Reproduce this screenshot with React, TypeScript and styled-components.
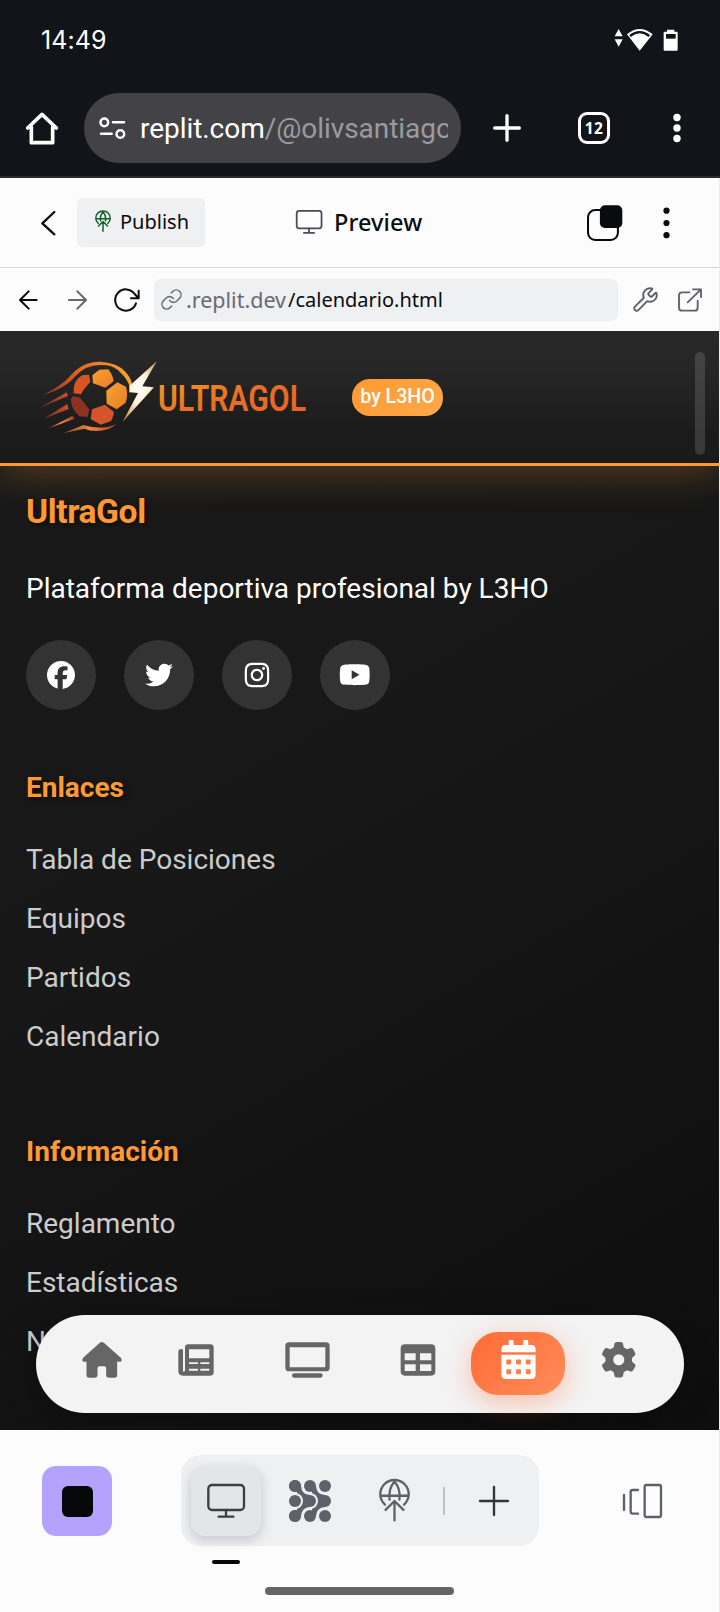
import React from 'react';
import styled, { createGlobalStyle, css } from 'styled-components';
import { FaFacebook, FaTwitter, FaInstagram, FaYoutube, FaGear } from 'react-icons/fa6';
import { FaCalendarAlt } from 'react-icons/fa';
import { Link, Wrench } from 'lucide-react';

const GlobalStyle = createGlobalStyle`
  * { box-sizing: border-box; }
  body { margin: 0; background: #fcfcfc; font-family: Roboto, sans-serif; }
  h2, h3, p, ul { margin: 0; padding: 0; }
  button { border: 0; padding: 0; margin: 0; background: none; font: inherit; color: inherit; }
  svg { display: block; flex: none; overflow: visible; }
`;

const Screen = styled.div`
  width: 720px;
  height: 1612px;
  display: flex;
  flex-direction: column;
  overflow: hidden;
`;

/* ---------- Android status bar and browser bar ---------- */

const StatusBar = styled.div`
  height: 80px;
  display: flex;
  align-items: center;
  padding: 0 41px 0 41px;
  background: #131419;
  color: #fff;
`;

const Clock = styled.span`
  flex: 1;
  font-family: Inter, sans-serif;
  font-size: 25px;
  line-height: 32px;
  letter-spacing: 0.1px;
`;

const BrowserBar = styled.div`
  height: 98px;
  display: flex;
  align-items: flex-start;
  padding: 13px 0 0 26px;
  background: #131419;
  border-bottom: 2px solid #2a2a31;
  color: #fff;
`;

const BarSlot = styled.div<{ $w: number; $ml: number }>`
  width: ${p => p.$w}px;
  margin-left: ${p => p.$ml}px;
  height: 70px;
  display: flex;
  align-items: center;
  justify-content: center;
`;

const Omnibox = styled.div`
  width: 377px;
  height: 70px;
  margin-left: 26px;
  padding: 0 13px 0 15px;
  display: flex;
  align-items: center;
  border-radius: 35px;
  background: #434347;
`;

const OmniText = styled.div`
  flex: 1;
  margin-left: 14px;
  padding-top: 1px;
  overflow: hidden;
  white-space: nowrap;
  font-size: 28px;
  line-height: 40px;
  letter-spacing: -0.05px;
  span { color: #9b9b9f; }
`;

const TabCount = styled.div`
  width: 32px;
  height: 32px;
  border: 3px solid #fff;
  border-radius: 9px;
  font: 700 15.5px/26px 'Open Sans', sans-serif;
  letter-spacing: 0.4px;
  text-align: center;
`;

/* ---------- Workspace header ---------- */

const Workspace = styled.div`
  flex: 1;
  display: flex;
  flex-direction: column;
  border-right: 1px solid #ededf0;
  background: #fcfcfc;
`;

const ToolHeader = styled.div`
  height: 90px;
  display: flex;
  align-items: center;
  padding-left: 41px;
  border-bottom: 1px solid #d3d4d6;
  color: #0a0b0d;
`;

const PublishButton = styled.button`
  width: 128px;
  height: 49px;
  margin-left: 21px;
  padding: 0 0 2px 18px;
  display: flex;
  align-items: center;
  gap: 9px;
  border-radius: 6px;
  background: #eff0f2;
  font: 400 20px/28px 'Noto Sans', sans-serif;
`;

const Title = styled.div`
  margin-left: 91px;
  width: 291px;
  padding-bottom: 2px;
  display: flex;
  align-items: center;
  gap: 12px;
  font: 500 23.5px/32px 'Noto Sans', sans-serif;
  letter-spacing: 0.1px;
`;

const AddressRow = styled.div`
  height: 63px;
  display: flex;
  align-items: center;
  padding-left: 19px;
`;

const Address = styled.div`
  width: 464px;
  height: 42px;
  margin-left: 14px;
  padding-left: 6px;
  display: flex;
  align-items: center;
  border-radius: 7px;
  background: #eff0f2;
  color: #0a0b0d;
  font: 400 20px/28px 'Noto Sans', sans-serif;
  white-space: nowrap;
`;

const Host = styled.span`
  width: 102px;
  margin-left: 3px;
  color: #696a72;
  font-size: 21.5px;
`;

const Path = styled.span`
  letter-spacing: 0;
`;

const Spacer = styled.div<{ $w: number }>`
  width: ${p => p.$w}px;
`;

/* ---------- Previewed site ---------- */

const Site = styled.div`
  position: relative;
  height: 1099px;
  overflow: hidden;
  background: linear-gradient(150deg, #1a1a1a 0%, #171717 45%, #0e0e0e 100%);
`;

const SiteHeader = styled.header`
  position: relative;
  height: 135px;
  display: flex;
  align-items: center;
  gap: 44px;
  padding-left: 38px;
  border-bottom: 3px solid #ff9933;
  background: linear-gradient(180deg, #282828 0%, #262626 30%, #1b1b1b 75%, #1a1a1a 100%);
  box-shadow: 0 7px 35px rgba(255, 153, 51, 0.27);
`;

const LogoWord = styled.text`
  font: 600 108px Roboto, sans-serif;
`;

const Badge = styled.span`
  width: 91px;
  height: 37px;
  border-radius: 18px;
  background: linear-gradient(135deg, #ff9933, #ffa947);
  color: #fff;
  font: 500 19.6px/35px Roboto, sans-serif;
  text-align: center;
  white-space: nowrap;
`;

const ScrollThumb = styled.div`
  position: absolute;
  top: 21px;
  right: 14px;
  width: 10px;
  height: 103px;
  border-radius: 5px;
  background: linear-gradient(#444, #383838);
`;

const Footer = styled.footer`
  padding: 26px 26px 0;
`;

const heading = css`
  color: #ff9933;
  font-weight: 700;
  text-shadow: 2px 2px 4px rgba(0, 0, 0, 0.5);
`;

const Brand = styled.h2`
  ${heading}
  font-size: 33.6px;
  line-height: 40px;
  letter-spacing: -0.4px;
`;

const Tagline = styled.p`
  margin-top: 35px;
  color: #fff;
  font-size: 28px;
  line-height: 44px;
`;

const Socials = styled.div`
  display: flex;
  gap: 28px;
  margin-top: 29px;
`;

const Social = styled.a`
  width: 70px;
  height: 70px;
  display: flex;
  align-items: center;
  justify-content: center;
  border-radius: 50%;
  background: #333;
  color: #fff;
`;

const Section = styled.section<{ $mt: number }>`
  margin-top: ${p => p.$mt}px;
`;

const SectionTitle = styled.h3`
  ${heading}
  font-size: 28px;
  line-height: 34px;
`;

const Links = styled.ul`
  margin-top: 25px;
  list-style: none;
  color: #ccc;
  font-size: 28px;
  line-height: 59px;
`;

const TabBar = styled.nav`
  position: absolute;
  left: 36px;
  bottom: 17px;
  width: 648px;
  height: 98px;
  display: flex;
  padding: 17px 0 0 22px;
  border-radius: 49px;
  background: #f3f3f3;
  box-shadow: 0 8px 32px rgba(0, 0, 0, 0.3);
`;

const Tab = styled.a<{ $w: number; $active?: boolean }>`
  width: ${p => p.$w}px;
  height: 63px;
  padding-bottom: 8px;
  display: flex;
  align-items: center;
  justify-content: center;
  color: #666;
  ${p =>
    p.$active &&
    css`
      margin: 0 4px;
      border-radius: 27px;
      background: linear-gradient(135deg, #ff6b35, #ff8c5a);
      box-shadow: 0 7px 26px rgba(255, 107, 53, 0.38);
      color: #fff;
    `}
`;

/* ---------- Bottom dock ---------- */

const Dock = styled.div`
  position: relative;
  height: 182px;
  display: flex;
  align-items: flex-start;
  padding: 25px 0 0 42px;
`;

const AgentButton = styled.button`
  width: 70px;
  height: 70px;
  margin-top: 11px;
  display: flex;
  align-items: center;
  justify-content: center;
  border-radius: 14px;
  background: #b3a3ff;
`;

const AgentMark = styled.span`
  width: 31px;
  height: 31px;
  border-radius: 6px;
  background: #07080a;
`;

const ToolGroup = styled.div`
  width: 358px;
  height: 91px;
  margin: 0 83px 0 69px;
  padding: 0 10px;
  display: flex;
  align-items: center;
  gap: 14px;
  border-radius: 20px;
  background: #eff0f2;
`;

const Tool = styled.button<{ $active?: boolean }>`
  position: relative;
  width: 70px;
  height: 70px;
  display: flex;
  align-items: center;
  justify-content: center;
  border-radius: 14px;
  ${p =>
    p.$active &&
    css`
      background: #e4e5e7;
      box-shadow: 0 4px 12px rgba(10, 12, 20, 0.18);
      &::after {
        content: '';
        position: absolute;
        left: 21px;
        top: 94px;
        width: 28px;
        height: 4px;
        border-radius: 2px;
        background: #07080a;
      }
    `}
`;

const Divider = styled.span`
  width: 2px;
  height: 28px;
  background: #c0c1c4;
`;

const LayoutButton = styled.button`
  margin-top: 29px;
`;

const GestureBar = styled.div`
  position: absolute;
  left: 265px;
  bottom: 17px;
  width: 189px;
  height: 8px;
  border-radius: 4px;
  background: #666;
`;

/* ---------- Icons ---------- */

type LineProps = {
  w: number;
  h: number;
  box: string;
  color?: string;
  sw: number;
  children: React.ReactNode;
};

const LineIcon = ({ w, h, box, color = 'currentColor', sw, children }: LineProps) => (
  <svg width={w} height={h} viewBox={box} fill="none" stroke={color} strokeWidth={sw} strokeLinecap="round" strokeLinejoin="round">
    {children}
  </svg>
);

const StatusIcons = () => (
  <svg width="64" height="24" viewBox="766 82 192 72" fill="#fff">
    <path d="M777 85l12 22h-24zM777 138l12-22h-24z" />
    <path d="M802 101Q840 69 879 101L840 150Z" />
    <path d="M811 106Q840 83 869 106" fill="none" stroke="#131419" strokeWidth="7" />
    <path d="M915 93h7v-6h22v6h7q3 0 3 3v51q0 3-3 3h-36q-3 0-3-3v-51q0-3 3-3z" />
    <path d="M919 100h29v14h-29z" fill="#131419" />
  </svg>
);

const HomeOutline = () => (
  <LineIcon w={32} h={33} box="78 335 96 99" sw={11}>
    <path d="M94 380V427H158V380M83 383L126 342L169 383" />
  </LineIcon>
);

const Tune = () => (
  <LineIcon w={27} h={24} box="296 348 81 72" sw={7.5}>
    <circle cx="312" cy="367" r="11.5" />
    <path d="M338 367H371M302 401H334" />
    <circle cx="360" cy="402" r="11.5" />
  </LineIcon>
);

const Monitor = ({ w, h, sw, color }: { w: number; h: number; sw: number; color: string }) => (
  <LineIcon w={w} h={h} box="622 162 112 102" sw={sw} color={color}>
    <rect x="625" y="165" width="107" height="75" rx="11" />
    <path d="M678 240V260M656 260H700" />
  </LineIcon>
);

const GlobeUp = ({ w, h, color, sw }: { w: number; h: number; color: string; sw: number }) => (
  <LineIcon w={w} h={h} box="55 150 94 126" color={color} sw={sw}>
    <path d="M73 224A43 43 0 1 1 131 224" />
    <path d="M60 197H144M87 209Q83 176 102 154Q121 176 117 209M102 214V272M75 240L102 213L129 240" />
  </LineIcon>
);

const inkColor = '#5f616a';
const groupColor = '#eff0f2';

const Chevron = ({ x }: { x: number }) => (
  <g transform={`translate(${x} 0)`}>
    {[{ c: groupColor, grow: 6 }, { c: inkColor, grow: 0 }].map(({ c, grow }) => (
      <g key={c} fill={c}>
        <path d="M36 18Q38 44 63 45V81Q38 82 36 108L24 92V34Z" stroke={c} strokeWidth={grow * 2} />
        {[[18, 18], [63, 63], [18, 108]].map(([cx, cy]) => (
          <circle key={`${cx}-${cy}`} cx={cx} cy={cy} r={18 + grow} />
        ))}
      </g>
    ))}
  </g>
);

const NetworkMark = () => (
  <svg width="42" height="42" viewBox="0 0 126 126" fill={inkColor}>
    <Chevron x={45} />
    <Chevron x={0} />
    <circle cx="18" cy="63" r="24" fill={groupColor} />
    <circle cx="18" cy="18" r="18" />
    <circle cx="18" cy="108" r="18" />
    <circle cx="18" cy="63" r="18" />
    <circle cx="108" cy="18" r="18" />
    <circle cx="108" cy="108" r="18" />
  </svg>
);

const Logo = () => (
  <svg width="270" height="78" viewBox="114 84 810 234">
    <defs>
      <linearGradient id="swoosh" x1="0" x2="1" y1="0" y2="0">
        <stop offset="0" stopColor="#8e3220" />
        <stop offset="0.45" stopColor="#e96a25" />
        <stop offset="1" stopColor="#f8a82e" />
      </linearGradient>
      <linearGradient id="streak" x1="0" x2="1" y1="0" y2="0">
        <stop offset="0" stopColor="#6e2b1c" />
        <stop offset="1" stopColor="#cf4c33" />
      </linearGradient>
      <linearGradient id="tail" x1="0" x2="1" y1="0" y2="0">
        <stop offset="0" stopColor="#8a4a28" />
        <stop offset="0.5" stopColor="#f5853a" />
        <stop offset="1" stopColor="#a33a20" />
      </linearGradient>
      <linearGradient id="amber" x1="0" x2="1" y1="0" y2="1">
        <stop offset="0" stopColor="#f8a52d" />
        <stop offset="1" stopColor="#ea7a2a" />
      </linearGradient>
      <linearGradient id="word" x1="0" x2="1" y1="0" y2="0.9">
        <stop offset="0" stopColor="#f2a127" />
        <stop offset="0.5" stopColor="#e87024" />
        <stop offset="1" stopColor="#ea6226" />
      </linearGradient>
      <radialGradient id="flash" cx="0.5" cy="0.45" r="0.6">
        <stop offset="0" stopColor="#fff" />
        <stop offset="0.45" stopColor="#fff1d6" />
        <stop offset="1" stopColor="#c99a62" />
      </radialGradient>
    </defs>
    <path d="M128 196Q186 166 211 137Q248 94 300 95Q350 97 376 125Q397 148 397 172L390 174Q384 148 362 128Q342 108 320 106Q260 98 226 139Q198 174 128 196Z" fill="url(#swoosh)" />
    <path d="M118 234L200 187L204 198Z" fill="url(#streak)" />
    <path d="M129 267L202 222L206 237Z" fill="url(#streak)" />
    <path d="M143 296L217 258L224 266Z" fill="url(#tail)" />
    <path d="M189 310L250 285Q306 302 350 282Q330 302 289 303Q268 303 253 296Z" fill="url(#tail)" />
    <path d="M247 136L267 134L271 155L250 181L243 193L221 190Q218 150 247 136Z" fill="#d95424" />
    <path d="M277 136L298 119L325 118Q338 134 341 154L316 173L279 160Z" fill="url(#amber)" />
    <path d="M352 157L378 170Q385 195 377 218L350 238L320 221L319 182Z" fill="url(#amber)" />
    <path d="M218 199L239 202L268 238L263 261L238 259Q212 236 213 208Z" fill="#8b3222" />
    <path d="M276 238L315 224L342 246Q338 268 332 274L302 284L272 267Z" fill="#d55429" />
    <path d="M471 93L388 168V187L414 189L368 275L462 172L427 169Z" fill="url(#flash)" />
    <LogoWord x="474" y="242" textLength="444" lengthAdjust="spacingAndGlyphs" fill="url(#word)">
      ULTRAGOL
    </LogoWord>
  </svg>
);

const HouseSolid = () => (
  <svg width="40" height="36" viewBox="245 155 119 108" fill="currentColor">
    <path d="M297 158Q304 152 311 158L361 202Q366 208 361 214H350V254Q350 262 342 262H326Q317 262 317 254V234Q317 228 311 228H297Q291 228 291 234V254Q291 262 282 262H266Q258 262 258 254V214H248Q243 208 248 202Z" />
  </svg>
);

const NewsSolid = () => (
  <svg width="36" height="32" viewBox="534 161 108 96" fill="currentColor" fillRule="evenodd">
    <path d="M565 162H631Q641 162 641 172V246Q641 256 631 256H549Q535 256 535 242V183Q535 177 541 177H549V241Q549 244 552 244Q555 244 555 240V172Q555 162 565 162ZM567 177V204H628V177ZM567 216V221H594V216ZM601 216V221H628V216ZM567 235V241H594V235ZM601 235V241H628V235Z" />
  </svg>
);

const TvSolid = () => (
  <svg width="45" height="36" viewBox="856 155 135 108" fill="currentColor" fillRule="evenodd">
    <path d="M868 156H979Q990 156 990 167V232Q990 243 979 243H868Q857 243 857 232V167Q857 156 868 156ZM870 171V231H977V171Z" />
    <rect x="877" y="249" width="92" height="13" rx="6.5" />
  </svg>
);

const TableSolid = () => (
  <svg width="36" height="32" viewBox="118 161 108 96" fill="currentColor" fillRule="evenodd">
    <path d="M133 162H211Q224 162 224 175V243Q224 256 211 256H133Q120 256 120 243V175Q120 162 133 162ZM132 189V210H165V189ZM178 189V210H212V189ZM132 222V242H165V222ZM178 222V242H212V222Z" />
  </svg>
);

const linkGroups = [
  { title: 'Enlaces', gap: 61, items: ['Tabla de Posiciones', 'Equipos', 'Partidos', 'Calendario'] },
  { title: 'Información', gap: 69, items: ['Reglamento', 'Estadísticas', 'Noticias'] },
];

export default function App() {
  return (
    <Screen>
      <GlobalStyle />
      <StatusBar>
        <Clock>14:49</Clock>
        <StatusIcons />
      </StatusBar>
      <BrowserBar>
        <BarSlot $w={32} $ml={0}><HomeOutline /></BarSlot>
        <Omnibox>
          <Tune />
          <OmniText>replit.com<span>/@olivsantiago</span></OmniText>
        </Omnibox>
        <BarSlot $w={30} $ml={31}>
          <LineIcon w={28} h={28} box="0 0 84 84" sw={10}><path d="M42 5V79M5 42H79" /></LineIcon>
        </BarSlot>
        <BarSlot $w={32} $ml={56}><TabCount>12</TabCount></BarSlot>
        <BarSlot $w={8} $ml={63}>
          <svg width="8" height="28" viewBox="0 0 8 28" fill="#fff">
            <circle cx="4" cy="3.5" r="3.7" /><circle cx="4" cy="14" r="3.7" /><circle cx="4" cy="24.5" r="3.7" />
          </svg>
        </BarSlot>
      </BrowserBar>

      <Workspace>
        <ToolHeader>
          <LineIcon w={15} h={24} box="125 104 45 72" sw={7}><path d="M165 107L129 141L165 174" /></LineIcon>
          <PublishButton>
            <GlobeUp w={16} h={21} color="#14602a" sw={9} />
            Publish
          </PublishButton>
          <Title>
            <Monitor w={26} h={24} sw={7.5} color="#4a4c55" />
            Preview
          </Title>
          <svg width="36" height="36" viewBox="684 86 106 106" fill="#0a0b0d">
            <rect x="687" y="101" width="88" height="88" rx="21" fill="none" stroke="#0a0b0d" strokeWidth="6" />
            <rect x="722" y="87" width="66" height="67" rx="15" />
          </svg>
          <Spacer $w={40} />
          <svg width="7" height="32" viewBox="0 0 7 32" fill="#0a0b0d">
            <circle cx="3.5" cy="3.7" r="3.1" /><circle cx="3.5" cy="16" r="3.1" /><circle cx="3.5" cy="28.2" r="3.1" />
          </svg>
        </ToolHeader>
        <AddressRow>
          <LineIcon w={19} h={20} box="56 345 57 60" sw={6} color="#0a0b0d"><path d="M85 349L59 375L85 401M60 375H109" /></LineIcon>
          <Spacer $w={30} />
          <LineIcon w={19} h={20} box="203 345 57 60" sw={6} color="#65666e"><path d="M231 349L257 375L231 401M256 375H206" /></LineIcon>
          <Spacer $w={27} />
          <LineIcon w={26} h={24} box="343 338 78 72" sw={6} color="#0a0b0d">
            <path d="M409 384A32 32 0 1 1 405 356L417 369M417 346V369H394" />
          </LineIcon>
          <Address>
            <Link size={23} color="#6f7078" strokeWidth={1.6} />
            <Host>.replit.dev</Host>
            <Path>/calendario.html</Path>
          </Address>
          <Spacer $w={14} />
          <Wrench size={27} color="#5f6069" strokeWidth={1.7} />
          <Spacer $w={19} />
          <LineIcon w={24} h={24} box="957 339 72 72" sw={5.6} color="#5f6069">
            <path d="M991 352H969Q960 352 960 361V398Q960 407 969 407H1007Q1016 407 1016 398V377M1002 343H1026V366M1026 343L986 382" />
          </LineIcon>
        </AddressRow>

        <Site>
          <SiteHeader>
            <Logo />
            <Badge>by L3HO</Badge>
            <ScrollThumb />
          </SiteHeader>
          <Footer>
            <Brand>UltraGol</Brand>
            <Tagline>Plataforma deportiva profesional by L3HO</Tagline>
            <Socials>
              <Social><FaFacebook size={28} /></Social>
              <Social><FaTwitter size={28} /></Social>
              <Social><FaInstagram size={28} /></Social>
              <Social><FaYoutube size={31.5} /></Social>
            </Socials>
            {linkGroups.map(group => (
              <Section key={group.title} $mt={group.gap}>
                <SectionTitle>{group.title}</SectionTitle>
                <Links>{group.items.map(item => <li key={item}>{item}</li>)}</Links>
              </Section>
            ))}
          </Footer>
          <TabBar>
            <Tab $w={87}><HouseSolid /></Tab>
            <Tab $w={102}><NewsSolid /></Tab>
            <Tab $w={121}><TvSolid /></Tab>
            <Tab $w={99}><TableSolid /></Tab>
            <Tab $w={94} $active><FaCalendarAlt size={39} /></Tab>
            <Tab $w={99}><FaGear size={35.5} /></Tab>
          </TabBar>
        </Site>

        <Dock>
          <AgentButton><AgentMark /></AgentButton>
          <ToolGroup>
            <Tool $active><Monitor w={38} h={34} sw={7} color="#3c3e47" /></Tool>
            <Tool><NetworkMark /></Tool>
            <Tool><GlobeUp w={31} h={42} color="#5f616a" sw={7} /></Tool>
            <Divider />
            <Tool>
              <LineIcon w={30} h={30} box="0 0 90 90" sw={7} color="#34353c"><path d="M45 3V87M3 45H87" /></LineIcon>
            </Tool>
          </ToolGroup>
          <LayoutButton>
            <LineIcon w={40} h={34} box="789 162 120 102" sw={7} color="#5f616a">
              <rect x="857" y="165" width="49" height="96" rx="5" />
              <path d="M837 180H821Q815 180 815 186V244Q815 251 821 251H837M795 195V240" />
            </LineIcon>
          </LayoutButton>
          <GestureBar />
        </Dock>
      </Workspace>
    </Screen>
  );
}
